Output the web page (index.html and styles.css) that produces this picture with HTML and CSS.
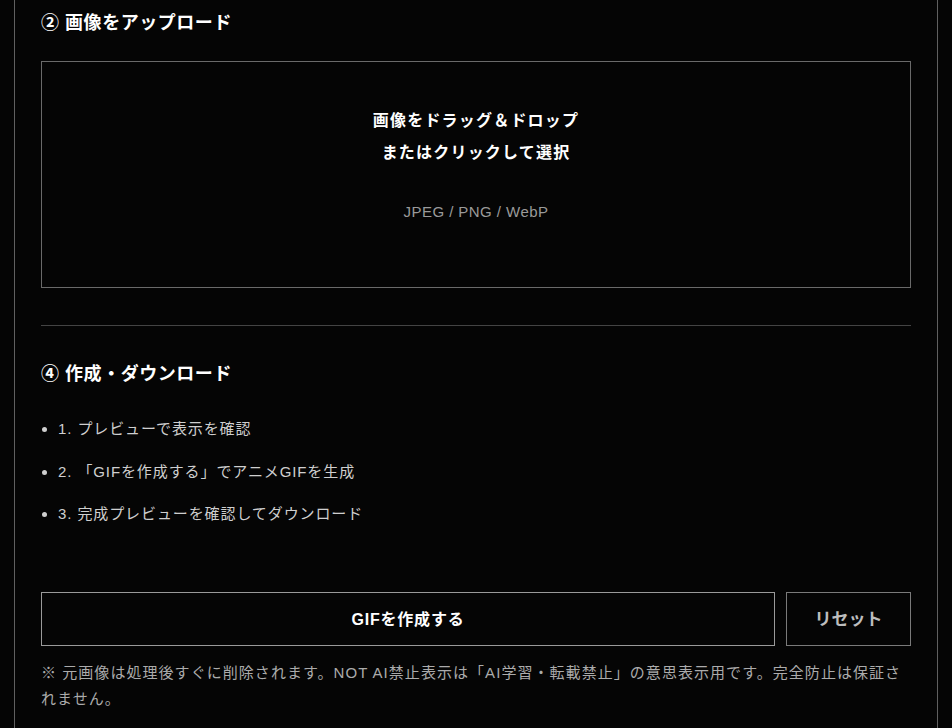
FILE: index.html
```html
<!DOCTYPE html>
<html lang="ja">
<head>
<meta charset="utf-8">
<title>NOT AI GIF</title>
<link rel="stylesheet" href="styles.css">
</head>
<body>
<main class="card">
  <section class="step">
    <h2 class="step-title">② 画像をアップロード</h2>
    <label class="dropzone">
      <span class="dropzone-main">画像をドラッグ＆ドロップ<br>またはクリックして選択</span>
      <span class="dropzone-formats">JPEG / PNG / WebP</span>
    </label>
  </section>

  <hr class="divider">

  <section class="step">
    <h2 class="step-title">④ 作成・ダウンロード</h2>
    <ul class="steps-list">
      <li>1. プレビューで表示を確認</li>
      <li>2. 「GIFを作成する」でアニメGIFを生成</li>
      <li>3. 完成プレビューを確認してダウンロード</li>
    </ul>
    <div class="actions">
      <button class="btn btn-primary" type="button">GIFを作成する</button>
      <button class="btn btn-reset" type="button">リセット</button>
    </div>
    <p class="note">※ 元画像は処理後すぐに削除されます。NOT AI禁止表示は「AI学習・転載禁止」の意思表示用です。完全防止は保証されません。</p>
  </section>
</main>
</body>
</html>
```

FILE: styles.css
```css
* {
  box-sizing: border-box;
}

html,
body {
  margin: 0;
  background: #050505;
  color: #fff;
  font-family: "Liberation Sans", "Noto Sans CJK JP", sans-serif;
}

.card {
  margin: 0 14px;
  border-left: 1px solid #606060;
  border-right: 1px solid #606060;
  padding: 10px 26px 40px;
  min-height: 728px;
}

.step-title {
  margin: 0;
  font-size: 18px;
  line-height: 26px;
  font-weight: 700;
  letter-spacing: 0.03em;
  color: #fff;
}

.dropzone {
  margin-top: 25px;
  height: 227px;
  border: 1px solid #6a6a6a;
  display: flex;
  flex-direction: column;
  align-items: center;
  padding-top: 43px;
  cursor: pointer;
}

.dropzone-main {
  font-size: 16px;
  line-height: 32px;
  font-weight: 700;
  letter-spacing: 0.075em;
  text-align: center;
  color: #fff;
}

.dropzone-formats {
  margin-top: 33px;
  font-size: 15px;
  line-height: 20px;
  letter-spacing: 0.03em;
  color: #9a9a9a;
}

.divider {
  margin: 37px 0 35px;
  border: 0;
  border-top: 1px solid #444;
  height: 0;
}

.steps-list {
  margin: 29px 0 0;
  padding-left: 17px;
  font-size: 15px;
  line-height: 25.5px;
  letter-spacing: 0.06em;
  color: #cfcfcf;
}

.steps-list li {
  margin-bottom: 17px;
}

.steps-list li:last-child {
  margin-bottom: 0;
}

.actions {
  margin-top: 65px;
  display: grid;
  grid-template-columns: 1fr 125px;
  gap: 11px;
}

.btn {
  height: 54px;
  padding: 0 0 2px;
  background: transparent;
  border: 1px solid #8a8a8a;
  font-family: inherit;
  font-weight: 700;
  cursor: pointer;
}

.btn-primary {
  font-size: 16px;
  letter-spacing: 0.05em;
  color: #fff;
  border-color: #9a9a9a;
}

.btn-reset {
  font-size: 17px;
  color: #bdbdbd;
  border-color: #7a7a7a;
}

.note {
  margin: 14px 0 0;
  font-size: 15px;
  line-height: 26px;
  letter-spacing: 0.07em;
  color: #ababab;
}
```
